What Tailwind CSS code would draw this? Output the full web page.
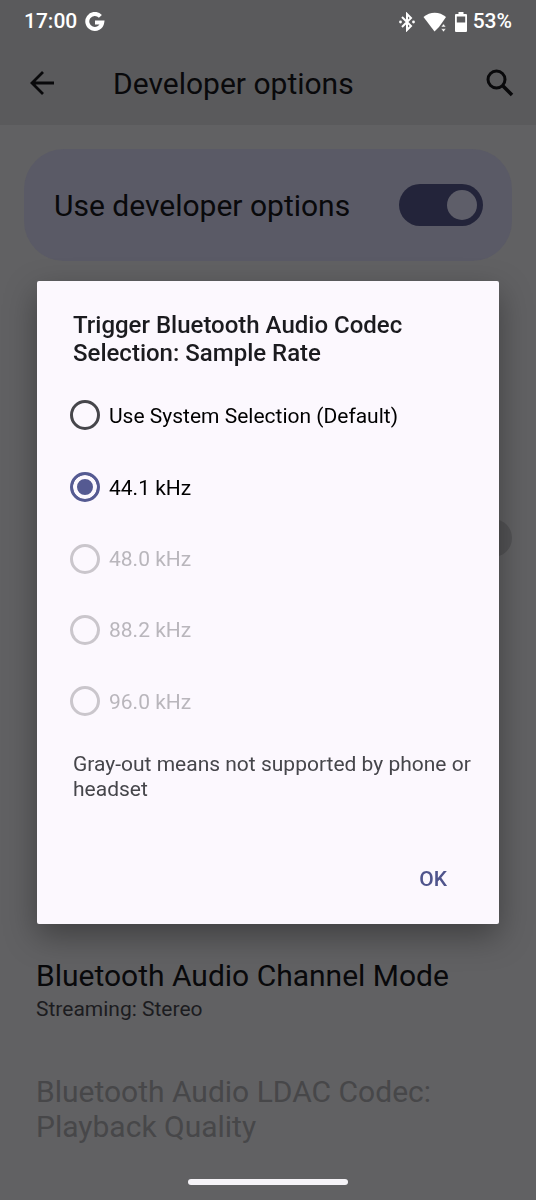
<!DOCTYPE html>
<html lang="en">

<head>
    <meta charset="UTF-8">
    <meta name="viewport" content="width=device-width, initial-scale=1.0">
    <title>Developer options</title>
    <script src="https://cdn.jsdelivr.net/npm/@tailwindcss/browser@4"></script>
</head>

<body class="min-h-screen bg-[#616163] font-[Roboto,sans-serif] text-[#09090b]">
    <header class="bg-[#5a5a5c] h-[125px]">
        <!-- status bar -->
        <div class="flex items-center justify-between h-11 px-6 text-[21px] font-medium text-white">
            <div class="flex items-center gap-2">
                <span>17:00</span>
                <svg class="size-5" viewBox="0 0 20 20" fill="none" stroke="currentColor" stroke-width="4">
                    <path d="M15.400 4.400A7.500 7.500 0 1 0 17.200 10.600H10" />
                </svg>
            </div>
            <div class="flex items-center gap-1.5">
                <svg class="w-4 h-5" viewBox="0 0 16 20" fill="none" stroke="currentColor" stroke-width="2">
                    <path d="M3 5l9 9-4 4V2l4 4-9 9" />
                    <circle cx="1.500" cy="10" r="1.400" fill="currentColor" stroke="none" />
                    <circle cx="14.500" cy="10" r="1.400" fill="currentColor" stroke="none" />
                </svg>
                <svg class="w-6 h-5 ml-0.5" viewBox="0 0 24 20" fill="currentColor">
                    <path d="M0.5 5C7 -0.8 16.500 -0.8 23 5L18.500 11.500 16 15 11.500 19.500Z" />
                    <path d="M20.500 11.800l2.500 3.200h-5zM20.500 20l2.500-3.200h-5z" stroke="#5a5a5c" stroke-width="0.6" />
                </svg>
                <svg class="w-3 h-5 ml-0.5" viewBox="0 0 12 20" fill="currentColor" fill-rule="evenodd">
                    <path d="M3.500 0h5v2H11a1 1 0 0 1 1 1v16a1 1 0 0 1-1 1H1a1 1 0 0 1-1-1V3a1 1 0 0 1 1-1h2.500zM1.800 4.500v6h8.400v-6z" />
                </svg>
                <span>53%</span>
            </div>
        </div>
        <!-- app bar -->
        <div class="flex items-center h-[78px] pl-[29px] pr-[22px]">
            <button type="button" aria-label="Back">
                <svg class="size-[26px]" viewBox="0 0 26 26" fill="none" stroke="currentColor" stroke-width="2.800">
                    <path d="M25 13H3M14 2L3 13l11 11" />
                </svg>
            </button>
            <h1 class="flex-1 ml-[58px] text-[30px]">Developer options</h1>
            <button type="button" aria-label="Search">
                <svg class="size-7" viewBox="0 0 28 28" fill="none" stroke="currentColor" stroke-width="3">
                    <circle cx="10.500" cy="10.500" r="8.500" />
                    <path d="M16.500 16.500l9.500 9.500" stroke-width="3.600" />
                </svg>
            </button>
        </div>
    </header>

    <main class="pt-6">
        <div class="flex items-center justify-between h-28 mx-6 pl-[30px] pr-[29px] rounded-[40px] bg-[#5a5a66]">
            <label for="devOptions" class="text-[30px]">Use developer options</label>
            <input type="checkbox" role="switch" id="devOptions" checked
                class="appearance-none flex items-center justify-end w-[84px] h-[42px] p-1.5 rounded-full bg-[#23243a] before:size-[30px] before:rounded-full before:bg-[#5e5e69]">
        </div>

        <div class="flex items-center justify-end h-[553px] px-6">
            <input type="checkbox" role="switch" aria-label="Option" class="appearance-none w-20 h-[38px] rounded-full bg-[#535355]">
        </div>

        <ul class="px-9 pt-36">
            <li>
                <h2 class="text-[30px] leading-[35px]">Bluetooth Audio Channel Mode</h2>
                <p class="mt-1 text-[21px] leading-[25px] text-[#1c1c1f]">Streaming: Stereo</p>
            </li>
            <li class="mt-[52px] text-[30px] leading-[35px] text-[#474749]">Bluetooth Audio LDAC Codec:<br>Playback Quality</li>
        </ul>
    </main>

    <div class="fixed inset-x-0 bottom-[15px] h-1.5 w-40 mx-auto rounded-full bg-[#f5f3f7]"></div>

    <div class="fixed inset-0 flex items-center px-[37px] pt-[5px]">
        <form role="dialog" aria-labelledby="dialogTitle"
            class="w-full pt-[30px] pb-5 rounded-xs bg-[#fcf8fe] shadow-[0_12px_32px_rgba(0,0,0,0.35)]">
            <h2 id="dialogTitle" class="px-9 text-2xl leading-7 font-medium text-[#1b1b1f]">Trigger Bluetooth Audio Codec Selection: Sample Rate</h2>
            <div class="mt-3 px-[33px] text-[21px] text-black">
                <label class="flex items-center gap-[9px] h-[72px]">
                    <input type="radio" name="rate" class="appearance-none size-[30px] rounded-full border-3 border-[#46464b]">
                    <span class="pt-[3px]">Use System Selection (Default)</span>
                </label>
                <label class="flex items-center gap-[9px] h-[72px]">
                    <input type="radio" name="rate" checked
                        class="appearance-none size-[30px] rounded-full border-3 border-[#555a92] bg-[#555a92] shadow-[inset_0_0_0_4px_#fcf8fe]">
                    <span class="pt-[3px]">44.1 kHz</span>
                </label>
                <label class="flex items-center gap-[9px] h-[71px] text-[#b9b6bc]">
                    <input type="radio" name="rate" disabled class="appearance-none size-[30px] rounded-full border-3 border-[#cac6cc]">
                    <span class="pt-[3px]">48.0 kHz</span>
                </label>
                <label class="flex items-center gap-[9px] h-[71px] text-[#b9b6bc]">
                    <input type="radio" name="rate" disabled class="appearance-none size-[30px] rounded-full border-3 border-[#cac6cc]">
                    <span class="pt-[3px]">88.2 kHz</span>
                </label>
                <label class="flex items-center gap-[9px] h-[72px] text-[#b9b6bc]">
                    <input type="radio" name="rate" disabled class="appearance-none size-[30px] rounded-full border-3 border-[#cac6cc]">
                    <span class="pt-[3px]">96.0 kHz</span>
                </label>
            </div>
            <p class="mt-[15px] pl-9 pr-6 text-[21px] leading-[25px] text-[#46464b]">Gray-out means not supported by phone or headset</p>
            <div class="flex justify-end mt-[54px] pr-7">
                <button type="button" class="h-12 px-6 text-[21px] font-medium text-[#4f548c]">OK</button>
            </div>
        </form>
    </div>
</body>

</html>
